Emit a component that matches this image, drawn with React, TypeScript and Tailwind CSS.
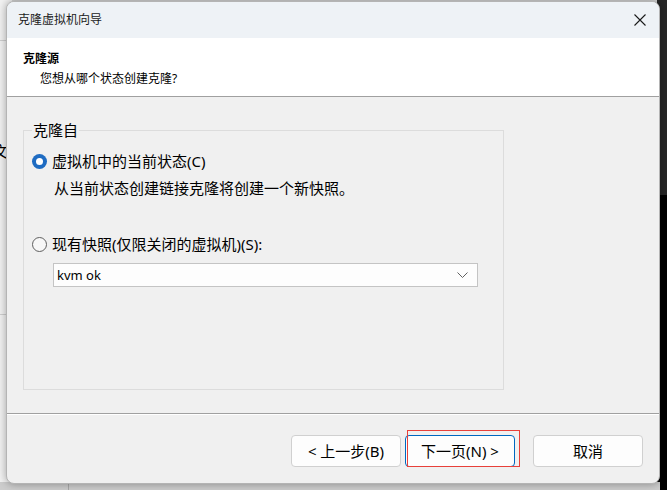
import React from 'react';

const font = { fontFamily: '"Noto Sans", "Noto Sans CJK SC", sans-serif' };

function Radio({ checked }: { checked: boolean }) {
  if (checked) {
    return (
      <span className="flex items-center justify-center w-[15px] h-[15px] rounded-full bg-[#1f6cc2]">
        <span className="w-[7px] h-[7px] rounded-full bg-white" />
      </span>
    );
  }
  return <span className="w-[15px] h-[15px] rounded-full border border-[#5f5f5f] bg-[#f7f7f7]" />;
}

function WizardButton({ label, primary }: { label: string; primary?: boolean }) {
  return (
    <button
      className={`relative w-[110px] h-[32px] rounded-[4px] bg-[#fdfdfd] text-[15px] leading-none text-black border ${
        primary ? 'border-[#0067c0]' : 'border-[#d0d0d0]'
      }`}
    >
      {label}
      {primary && (
        <span className="absolute left-[1px] top-[-6px] w-[113px] h-[37px] border border-[#e8403a] pointer-events-none" />
      )}
    </button>
  );
}

export default function App() {
  return (
    <div className="relative w-[667px] h-[490px] overflow-hidden bg-[#d4d4d4]" style={font}>
      {/* desktop behind the dialog */}
      <div className="absolute left-0 top-0 w-[12px] h-[486px] bg-[#f2f2f2]">
        <div className="absolute left-0 top-[40px] w-full h-px bg-[#cfcfcf]" />
        <div className="absolute left-0 top-[314px] w-full h-px bg-[#cfcfcf]" />
        <span className="absolute left-[-7px] top-[141px] text-[15px] leading-[20px] text-black">文</span>
      </div>
      <div className="absolute right-0 top-0 w-[10px] h-[195px] bg-[#262626]" />
      <div className="absolute right-0 top-[195px] w-[10px] h-[295px] bg-black" />
      <div className="absolute left-0 bottom-0 w-[660px] h-[8px] bg-[#cdcdcd]">
        <div className="absolute left-[68px] top-0 w-px h-full bg-[#a8a8a8]" />
      </div>

      {/* dialog window */}
      <div className="absolute left-[6px] top-[1px] w-[654px] h-[483px] rounded-[8px] overflow-hidden border border-[#b4b4b4] bg-[#f0f0f0] shadow-[0_0_8px_rgba(0,0,0,0.35)] flex flex-col">
        <div className="h-[36px] shrink-0 bg-[#eef2f6] flex items-center pl-[11px] pr-[12px]">
          <span className="text-[12px] text-[#1a1a1a] leading-none">克隆虚拟机向导</span>
          <svg className="ml-auto" width="14" height="14" viewBox="0 0 14 14">
            <path d="M1.5 1.5 L12.5 12.5 M12.5 1.5 L1.5 12.5" stroke="#1a1a1a" strokeWidth="1.1" fill="none" />
          </svg>
        </div>

        <div className="h-[59px] shrink-0 bg-white border-b border-[#a0a0a0] pl-[16px] pt-[12px]">
          <div className="text-[12px] font-bold leading-[18px] text-black">克隆源</div>
          <div className="text-[12px] leading-[18px] text-black pl-[17px] mt-[2px]">您想从哪个状态创建克隆?</div>
        </div>

        <div className="flex-1 pl-[16px] pt-[23px]">
          <fieldset className="w-[481px] h-[270px] border border-[#dcdcdc] px-[8px]">
            <legend className="px-[1px] text-[15px] leading-[20px] text-black">克隆自</legend>
            <div className="flex items-center gap-[5px] h-[20px] mt-[11px]">
              <Radio checked />
              <span className="text-[15px] leading-[20px] text-black">虚拟机中的当前状态(C)</span>
            </div>
            <div className="h-[20px] mt-[7px] pl-[22px] text-[15px] leading-[20px] text-black">
              从当前状态创建链接克隆将创建一个新快照。
            </div>
            <div className="flex items-center gap-[5px] h-[20px] mt-[36px]">
              <Radio checked={false} />
              <span className="text-[15px] leading-[20px] text-black">现有快照(仅限关闭的虚拟机)(S):</span>
            </div>
            <div className="ml-[21px] mt-[9px] w-[425px] h-[24px] bg-[#fdfdfd] border border-[#c4c4c4] flex items-center pl-[3px] pr-[9px]">
              <span className="text-[13px] leading-none text-black">kvm ok</span>
              <svg className="ml-auto" width="11" height="6" viewBox="0 0 11 6">
                <path d="M0.5 0.5 L5.5 5.5 L10.5 0.5" stroke="#606060" strokeWidth="1" fill="none" />
              </svg>
            </div>
          </fieldset>
        </div>

        <div className="shrink-0 border-t border-[#a0a0a0]">
          <div className="border-t border-white h-[69px] flex items-start justify-end pt-[20px] pr-[16px]">
            <div className="flex">
              <WizardButton label="< 上一步(B)" />
              <div className="w-[4px]" />
              <WizardButton label="下一页(N) >" primary />
              <div className="w-[18px]" />
              <WizardButton label="取消" />
            </div>
          </div>
        </div>
      </div>
    </div>
  );
}
